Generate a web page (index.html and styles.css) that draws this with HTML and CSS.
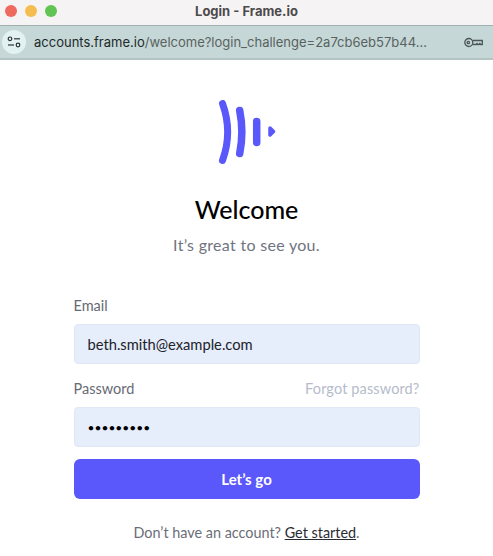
FILE: index.html
```html
<!DOCTYPE html>
<html lang="en">
<head>
	<meta charset="UTF-8">
	<title>Login - Frame.io</title>
	<link rel="stylesheet" href="styles.css">
</head>
<body>
	<div class="titlebar">
		<div class="lights">
			<span class="light red"></span>
			<span class="light yellow"></span>
			<span class="light green"></span>
		</div>
		<div class="windowTitle">Login - Frame.io</div>
	</div>
	<div class="urlbar">
		<div class="siteIcon">
			<svg width="14" height="12" viewBox="0 0 14 12" fill="none" stroke="#2c3436" stroke-width="1.2">
				<circle cx="3" cy="2.8" r="1.8"/>
				<path d="M7 2.8h6"/>
				<path d="M1 9h6"/>
				<circle cx="11" cy="9" r="1.8"/>
			</svg>
		</div>
		<div class="url"><span class="host">accounts.frame.io</span>/welcome?login_challenge=2a7cb6eb57b44...</div>
		<svg class="keyIcon" width="19" height="11" viewBox="0 0 19 11" fill="none" stroke="#4c5558" stroke-width="1.3">
			<circle cx="4.8" cy="5.5" r="4"/>
			<circle cx="4.3" cy="5.5" r="1.2"/>
			<path d="M8.8 3.5h9.5v4h-1.6l-.9-1-.9 1h-1l-.9-1-.9 1h-3.3"/>
		</svg>
	</div>

	<main class="page">
		<svg class="logo" width="59" height="65" viewBox="0 0 59 65" fill="none" stroke="#5a57fb" stroke-linecap="round">
			<path d="M5.5 3.5C12.2 22 12.2 42 5.5 60.500" stroke-width="7"/>
			<path d="M22.700 10.500C25.400 24 25.400 40 22.700 53.500" stroke-width="7.500"/>
			<path d="M39.700 21.500V42.500" stroke-width="7.500"/>
			<path d="M53 28L56.500 31.500L53 35Z" fill="#5a57fb" stroke-width="3.500" stroke-linejoin="round"/>
		</svg>
		<h1>Welcome</h1>
		<p class="sub">It’s great to see you.</p>

		<form class="loginForm">
			<div class="labelRow"><label>Email</label></div>
			<input class="field" type="text" value="beth.smith@example.com">
			<div class="labelRow second"><label>Password</label><a class="forgot">Forgot password?</a></div>
			<input class="field pass" type="password" value="secret123">
			<button class="go" type="button">Let’s go</button>
		</form>
		<p class="signup">Don’t have an account? <a>Get started</a>.</p>
	</main>
</body>
</html>
```

FILE: styles.css
```css
*{
	box-sizing: border-box;
}
body{
	margin: 0;
	background: white;
	font-family: Lato, "Open Sans", sans-serif;
	overflow: hidden;
}
.titlebar{
	height: 26px;
	display: flex;
	align-items: center;
	background: #f6f3f4;
	border-bottom: 1px solid #9fb0b0;
	padding-bottom: 3px;
}
.lights{
	display: flex;
	gap: 8px;
	padding-left: 5px;
}
.light{
	width: 12px;
	height: 12px;
	border-radius: 50%;
}
.red{
	background: #ee6a5f;
}
.yellow{
	background: #f5bd4f;
}
.green{
	background: #61c454;
}
.windowTitle{
	flex: 1;
	text-align: center;
	padding-right: 57px;
	font-family: Inter, sans-serif;
	font-size: 13px;
	font-weight: 700;
	color: #4c4a4b;
}
.urlbar{
	height: 34px;
	display: flex;
	align-items: center;
	background: #c5d7d6;
	border-bottom: 2px solid #b3c4c3;
	padding-left: 2px;
}
.siteIcon{
	width: 24px;
	height: 24px;
	border-radius: 50%;
	background: #e2f1f1;
	display: flex;
	align-items: center;
	justify-content: center;
}
.url{
	margin-left: 8px;
	font-family: Inter, sans-serif;
	font-size: 13px;
	color: #59625f;
	white-space: nowrap;
	flex: 1;
}
.host{
	color: #22292b;
}
.keyIcon{
	margin-right: 10px;
}
.page{
	display: flex;
	flex-direction: column;
	align-items: center;
	padding-top: 40px;
}
h1{
	margin: 29px 0 0;
	font-size: 25px;
	line-height: 30px;
	font-weight: 500;
	color: black;
}
.sub{
	margin: 11px 0 0;
	font-size: 16px;
	line-height: 20px;
	letter-spacing: .3px;
	color: #6f7480;
}
.loginForm{
	width: 346px;
	margin-top: 42px;
	display: flex;
	flex-direction: column;
}
.labelRow{
	display: flex;
	justify-content: space-between;
	font-size: 14.5px;
	line-height: 18px;
	color: #666a73;
	margin-bottom: 9px;
}
.second{
	margin-top: 16px;
}
.forgot{
	color: #b4bccb;
	letter-spacing: .13px;
}
.field{
	height: 40px;
	border: 1px solid #e0e8f5;
	border-radius: 4px;
	background: #e6edfb;
	padding: 0 13px;
	font-family: inherit;
	font-size: 14.7px;
	color: #20222a;
}
.pass{
	font-size: 12px;
	color: black;
}
.go{
	height: 40px;
	margin-top: 12px;
	border: none;
	border-radius: 6px;
	background: #5a57fb;
	color: white;
	font-family: inherit;
	font-size: 15px;
	font-weight: 700;
}
.signup{
	margin: 25px 0 0;
	font-size: 14.4px;
	line-height: 18px;
	color: #6b6e78;
}
.signup a{
	color: #2a2c35;
	text-decoration: underline;
}
```
